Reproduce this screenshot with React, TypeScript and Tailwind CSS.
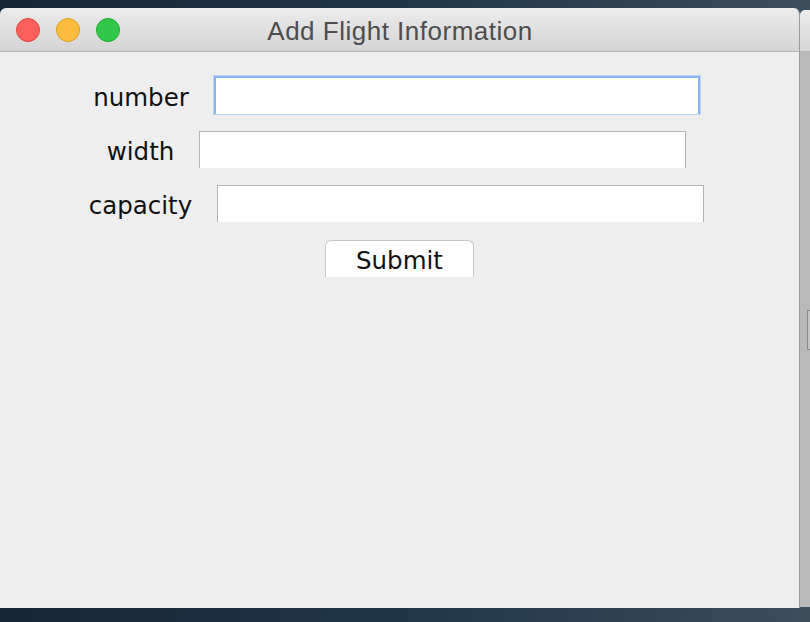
import React from "react";

const rows = [
  { label: "number", focused: true },
  { label: "width", focused: false },
  { label: "capacity", focused: false },
];

function TrafficLights() {
  return (
    <div className="flex items-center gap-[16px] pl-[16px]">
      <span className="block w-[24px] h-[24px] rounded-full bg-[#fc605c] border border-[#e0443e]" />
      <span className="block w-[24px] h-[24px] rounded-full bg-[#fdbc40] border border-[#dea123]" />
      <span className="block w-[24px] h-[24px] rounded-full bg-[#34c84a] border border-[#1aab29]" />
    </div>
  );
}

export default function App() {
  return (
    <div className="w-[810px] h-[622px] overflow-hidden bg-gradient-to-r from-[#172636] via-[#1f364b] to-[#3c4d5c] flex">
      {/* Main window */}
      <div className="mt-[8px] w-[800px] h-[600px] flex flex-col rounded-t-[6px] overflow-hidden border-r border-[#9a9a9a] shrink-0">
        {/* Title bar */}
        <div className="relative h-[44px] shrink-0 bg-gradient-to-b from-[#ececec] to-[#d4d4d4] border-b border-[#b3b3b3] flex items-center">
          <TrafficLights />
          <div
            className="absolute inset-0 flex items-center justify-center text-[26px] tracking-[0.5px] text-[#4d4d4d] pl-[1px] pt-[4px]"
            style={{ fontFamily: '"Liberation Sans", Arial, sans-serif' }}
          >
            Add Flight Information
          </div>
        </div>

        {/* Content */}
        <div
          className="flex-1 bg-[#eeeeee] flex flex-col items-center pt-[24px] gap-[17px] text-[24.5px] text-[#111]"
          style={{ fontFamily: '"DejaVu Sans", sans-serif' }}
        >
          {rows.map((row) => (
            <div key={row.label} className="flex items-center gap-[25px] pr-[6px]">
              <span className="leading-none pt-[6px]">{row.label}</span>
              {row.focused ? (
                <div className="w-[486px] h-[38px] bg-white border-t-[2px] border-x-[2px] border-[#86b3ee] shadow-[0_0_0_1px_#bcd6f7]" />
              ) : (
                <div className="w-[487px] h-[37px] bg-white border-t border-x border-[#b4b4b4]" />
              )}
            </div>
          ))}
          <button className="w-[149px] h-[37px] mt-[1px] pt-[4px] bg-white border border-b-0 border-[#c6c6c6] rounded-t-[6px] flex items-center justify-center leading-none">
            Submit
          </button>
        </div>
      </div>

      {/* Window behind, right edge */}
      <div className="mt-[10px] mb-[15px] flex-1 flex flex-col rounded-tl-[5px] overflow-hidden">
        <div className="h-[42px] bg-gradient-to-b from-[#ececec] to-[#d6d6d6] border-b border-[#b3b3b3]" />
        <div className="flex-1 bg-[#b9b9b9] flex flex-col justify-center pl-[7px]">
          <div className="h-[40px] border-l border-y border-[#8c8c8c] bg-[#c4c4c4]" />
        </div>
      </div>
    </div>
  );
}
